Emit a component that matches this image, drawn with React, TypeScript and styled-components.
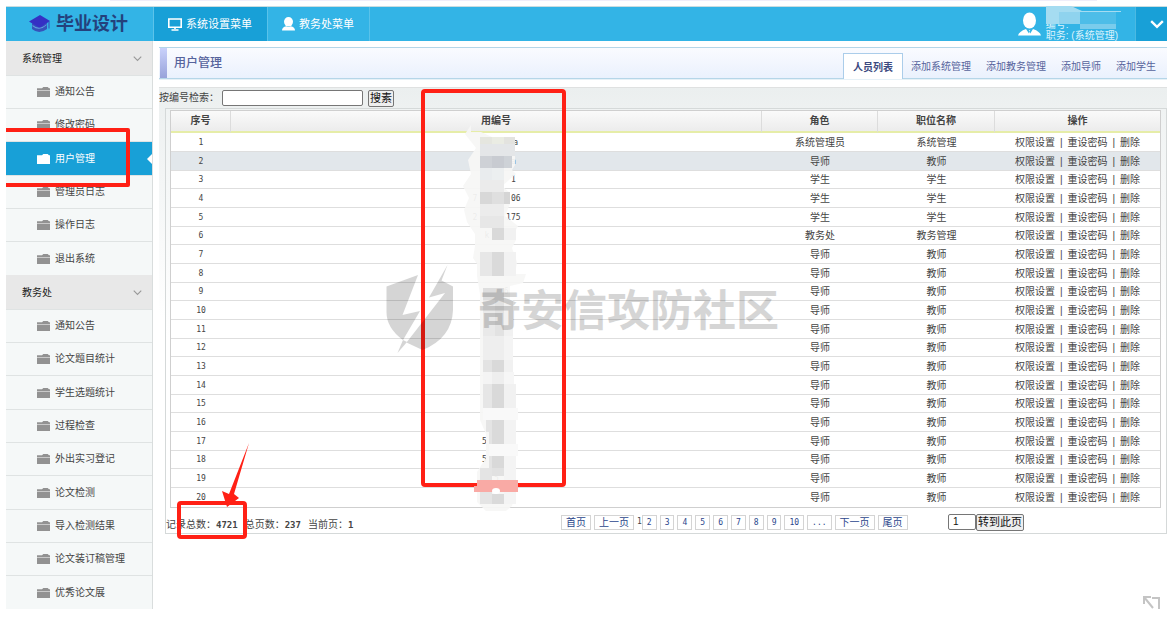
import React from 'react';
import styled, { createGlobalStyle, css } from 'styled-components';

const GlobalStyle = createGlobalStyle`
  * { box-sizing: border-box; }
  body {
    margin: 0;
    background: #fff;
    color: #444;
    font: 10px/16px "Liberation Sans", "Noto Sans CJK SC", sans-serif;
  }
  ul { list-style: none; margin: 0; padding: 0; }
  a { color: inherit; text-decoration: none; }
  h1, h2, p { margin: 0; font-size: inherit; }
  button, input { font: inherit; color: #111; }
`;

const Page = styled.div`
  position: relative;
  padding: 0 3px 0 6px;
  overflow: hidden;
`;

const TopStrip = styled.div`
  height: 6px;
  margin: 0 6%  0 9%;
  border-top: 1px solid #efeefa;
`;

const Header = styled.header`
  display: flex;
  height: 35px;
  border-top: 1px solid #c9dde0;
  background: #33b4e6;
  color: #fff;
`;

const Logo = styled.a`
  display: flex;
  align-items: center;
  gap: 5px;
  width: 148px;
  padding-left: 23px;
  border-right: 1px solid #5cc3ea;
  color: #24417c;
  font-size: 18px;
  line-height: 32px;
  font-weight: 700;
`;

const TopNav = styled.nav`
  display: flex;
  flex: 1;
`;

const TopLink = styled.a<{ $active?: boolean }>`
  display: flex;
  align-items: center;
  gap: 4px;
  padding: 0 15px 0 14px;
  border-right: 1px solid #59c2ea;
  font-size: 11px;
  background: ${(p) => (p.$active ? '#18a0d7' : 'transparent')};
`;

const User = styled.div`
  display: flex;
  align-items: center;
  gap: 5px;
  padding-right: 17px;
  color: #dcf3fc;
  line-height: 11px;
`;

const UserText = styled.div`
  align-self: flex-end;
`;

const Toggle = styled.button`
  display: flex;
  align-items: center;
  justify-content: flex-end;
  width: 32px;
  padding: 0 3px;
  border: 0;
  border-left: 1px solid #4bb9e2;
  background: #18a0d7;
`;

const Body = styled.div`
  display: flex;
  align-items: stretch;
`;

const Sidebar = styled.aside`
  flex: none;
  width: 147px;
  border-right: 1px solid #d9dddd;
  background: #f5f8f8;
`;

const GroupHead = styled.h2`
  display: flex;
  align-items: center;
  justify-content: space-between;
  height: 34px;
  padding: 1px 10px 0 16px;
  background: #e8e8e8;
  color: #222;
  font-weight: 400;
`;

const MenuItem = styled.li<{ $active?: boolean }>`
  height: 33px;
  border-top: 1px solid #dfe3e3;
  &:nth-child(3n) { height: 34px; }
  ${(p) =>
    p.$active &&
    css`
      background: #18a0d7;
      color: #fff;
    `}
`;

const MenuLink = styled.a`
  display: flex;
  align-items: center;
  gap: 5px;
  height: 100%;
  padding-left: 31px;
  svg:last-child:not(:first-child) { margin-left: auto; }
`;

const Main = styled.main`
  flex: 1;
  min-width: 0;
  padding: 6px 0 0 6px;
`;

const TitleBar = styled.div`
  display: flex;
  align-items: flex-end;
  height: 32px;
  padding-right: 4px;
  border-top: 1px solid #b5d6e8;
  border-bottom: 1px solid #b5d6e8;
  background: linear-gradient(#fafbff, #eaf1fd);
  color: #56639c;
  box-shadow: 0 1px #e6f1f7;
`;

const Accent = styled.span`
  align-self: stretch;
  width: 7px;
  margin-left: 1px;
  background: linear-gradient(#c9d1fb, #98a3da);
`;

const Title = styled.h1`
  flex: 1;
  align-self: center;
  padding-left: 7px;
  font-size: 12px;
  font-weight: 500;
`;

const Tab = styled.a<{ $active?: boolean }>`
  height: 25px;
  padding: 0 7px 0 8px;
  line-height: 27px;
  ${(p) =>
    p.$active &&
    css`
      margin-bottom: -1px;
      height: 26px;
      padding: 0 9px;
      border: 1px solid #abcdea;
      border-bottom: 0;
      background: #fff;
      color: #3d4a80;
      font-weight: 700;
    `}
`;

const Content = styled.section`
  margin-top: 8px;
  border-top: 1px solid #dfe1e1;
  background: linear-gradient(#ebefef, #eef1f1 24px, #fff 230px);
`;

const Search = styled.form`
  display: flex;
  align-items: center;
  height: 20px;
`;

const TextBox = styled.input`
  height: 16px;
  padding: 0 4px;
  border: 1px solid #767676;
  border-radius: 2px;
  background: #fff;
`;

const SearchBox = styled(TextBox)`
  width: 141px;
  margin: 0 5px 0 3px;
`;

const Button = styled.button`
  height: 17px;
  padding: 0 1px;
  border: 1px solid #767676;
  border-radius: 2px;
  background: #efefef;
  font-size: 11px;
  line-height: 14px;
`;

const Panel = styled.div`
  margin-left: 6px;
  border: 1px solid #d5d9d9;
  background: linear-gradient(#f0f3f3, #fff 230px);
`;

const TableWrap = styled.div`
  padding: 1px 5px 0 4px;
`;

const Table = styled.table`
  width: 100%;
  border: 1px solid #cfcfcf;
  border-spacing: 0;
  table-layout: fixed;
  background: #fff;
  text-align: center;
`;

const HeadCell = styled.th`
  height: 22px;
  padding: 0;
  border-bottom: 2px solid #e6eda8;
  border-right: 1px solid #dcdcdc;
  background: linear-gradient(#fafafa, #ececec);
  font-weight: 700;
  &:last-child { border-right: 0; }
`;

const Row = styled.tr<{ $active?: boolean }>`
  background: ${(p) => (p.$active ? '#e2e7eb' : '#fff')};
  td {
    height: 19px;
    padding: 0;
    border-bottom: 1px solid #dedede;
    line-height: 17px;
  }
  &:nth-child(3n) td { height: 18px; }
  &:last-child td { border-bottom: 0; }
`;

const Digits = styled.td`
  font-family: "DejaVu Sans Mono", monospace;
  font-size: 8px;
  white-space: pre;
`;

const Actions = styled.div`
  display: flex;
  justify-content: center;
  gap: 5px;
`;

const Footer = styled.div`
  display: grid;
  grid-template-columns: 395fr 387fr 218fr;
  align-items: center;
  height: 25px;
  padding-top: 3px;
`;

const Summary = styled.p`
  display: flex;
  gap: 7px;
  padding-top: 5px;
  b {
    font-family: "DejaVu Sans Mono", monospace;
    font-size: 9px;
  }
`;

const Pager = styled.nav`
  display: flex;
  align-items: center;
  color: #2b468c;
`;

const PageLink = styled.a<{ $digits?: boolean }>`
  height: 15px;
  margin-right: 3px;
  padding: 0 4px;
  border: 1px solid #d4d4d4;
  line-height: 14px;
  ${(p) =>
    p.$digits &&
    css`
      font-family: "DejaVu Sans Mono", monospace;
      font-size: 8px;
    `}
`;

const Current = styled.span`
  font-family: "DejaVu Sans Mono", monospace;
  font-size: 8px;
  color: #444;
`;

const Jump = styled.form`
  display: flex;
  align-items: center;
`;

const JumpBox = styled(TextBox)`
  width: 28px;
`;

const Overlay = styled.svg`
  position: absolute;
  top: 0;
  left: 0;
  pointer-events: none;
`;

const Corner = styled.svg`
  position: absolute;
  right: 10px;
  bottom: 0;
`;

const Folder = ({ color }: { color: string }) => (
  <svg width="13" height="10" viewBox="0 0 13 10" fill={color}>
    <path d="M0 1.3h5L6.3 0h4.4L12 1.3h1V10H0z" />
    <path d="M0 3.500h13" stroke="#fff" strokeOpacity=".5" />
  </svg>
);

const Chevron = ({ color, size, weight }: { color: string; size: number; weight: number }) => (
  <svg width={size} height={size} viewBox="0 0 12 12" fill="none" stroke={color} strokeWidth={weight}>
    <path d="M1 3.5l5 5 5-5" />
  </svg>
);

const CapIcon = () => (
  <svg width="22" height="20" viewBox="0 0 22 20">
    <path d="M3 9l7 4 8-4v6q-8 6-15 0z" fill="#3653bb" />
    <path d="M0 7.5L11 1l10 6-10.500 7z" fill="#3530c4" />
    <path d="M3.500 11q7 6 14-1v1.200q-7 6.500-14 1z" fill="#6fb3ea" opacity=".8" />
    <path d="M20 7.500v7" stroke="#3949b8" />
  </svg>
);

const MonitorIcon = () => (
  <svg width="14" height="13" viewBox="0 0 14 13" fill="none" stroke="#fff" strokeWidth="1.600">
    <path d="M.8 1h12.400v8.200H.8zM7 9v2M3.500 12h7" />
  </svg>
);

const PersonIcon = () => (
  <svg width="13" height="14" viewBox="0 0 13 14" fill="#fff">
    <ellipse cx="6.500" cy="4.800" rx="4.500" ry="4.800" />
    <path d="M0 13.500q0-3.500 4.300-4.200 2.200 1.400 4.400 0 4.300.7 4.300 4.200z" />
  </svg>
);

const AvatarIcon = () => (
  <svg width="23" height="24" viewBox="0 0 23 24" fill="#fff">
    <ellipse cx="11.500" cy="8.500" rx="6.500" ry="8" />
    <path d="M0 23.500q1-4 8-6.500l3 4.500.5-2-.7-1.200h1.500l-.8 1.200.7 2 2.800-4.500q7 2.500 8 6.500z" />
  </svg>
);

const groups = [
  { name: '系统管理', items: ['通知公告', '修改密码', '用户管理', '管理员日志', '操作日志', '退出系统'] },
  {
    name: '教务处',
    items: ['通知公告', '论文题目统计', '学生选题统计', '过程检查', '外出实习登记', '论文检测', '导入检测结果', '论文装订稿管理', '优秀论文展'],
  },
];

const roles: Record<number, [string, string]> = {
  1: ['系统管理员', '系统管理'],
  3: ['学生', '学生'],
  4: ['学生', '学生'],
  5: ['学生', '学生'],
  6: ['教务处', '教务管理'],
};

// Only the characters left legible beside the redaction are kept.
const codes: Record<number, string> = {
  1: '        a',
  2: '       a',
  3: '       1',
  4: '7       06',
  5: '2      175',
  6: 'k    ',
  9: '    6',
  17: '5     ',
  18: '5     ',
  19: '5',
};

const rows = Array.from({ length: 20 }, (_, i) => {
  const n = i + 1;
  const [role, title] = roles[n] || ['导师', '教师'];
  return { n, role, title, code: codes[n] || '' };
});

const tabs = ['人员列表', '添加系统管理', '添加教务管理', '添加导师', '添加学生'];
const pages = ['2', '3', '4', '5', '6', '7', '8', '9', '10', '...'];

// Mosaic tiles: x, y, width, height, fill.
const tiles: [number, number, number, number, string][] = [
  [480, 137, 12, 7, '#e5e6df'], [492, 137, 12, 7, '#eaece3'], [504, 137, 11, 7, '#e3e3df'],
  [480, 144, 35, 12, '#e4e6e8'],
  [480, 156, 12, 12, '#ced1d6'], [492, 156, 12, 12, '#c8cbd1'], [504, 156, 8, 12, '#ced2d7'],
  [480, 168, 12, 12, '#e9ecee'], [492, 168, 12, 12, '#eceff0'],
  [480, 180, 24, 12, '#ebebeb'],
  [480, 192, 12, 12, '#d8d8d8'], [492, 192, 12, 12, '#dfdfdf'], [504, 192, 6, 12, '#d5d5d5'],
  [480, 204, 24, 12, '#ececec'], [480, 216, 24, 12, '#e7e7e7'],
  [492, 228, 12, 12, '#d9d9d9'], [504, 228, 12, 12, '#f1f1f1'],
  [480, 252, 12, 24, '#e7e7e7'], [492, 252, 12, 24, '#dadada'], [504, 252, 12, 24, '#f2f2f2'],
  [483, 288, 21, 12, '#dedede'],
  [483, 300, 12, 36, '#e9e9e9'], [495, 300, 9, 36, '#e2e2e2'], [504, 300, 9, 36, '#f1f1f1'],
  [483, 336, 21, 24, '#eeeeee'], [504, 336, 9, 24, '#f4f4f4'],
  [483, 360, 9, 12, '#e3e3e3'], [492, 360, 12, 12, '#d9d9d9'], [504, 360, 9, 12, '#f1f1f1'],
  [483, 372, 9, 12, '#f4f4f4'], [492, 372, 12, 12, '#eeeeee'], [504, 372, 10, 12, '#f6f6f6'],
  [483, 384, 9, 24, '#e6e6e6'], [492, 384, 12, 24, '#d9d9d9'], [504, 384, 12, 24, '#f1f1f1'],
  [483, 408, 35, 12, '#f9f9f9'],
  [486, 420, 6, 12, '#e4e4e4'], [489, 432, 3, 12, '#e4e4e4'], [492, 420, 12, 24, '#dadada'], [504, 420, 12, 24, '#f3f3f3'],
  [489, 444, 29, 12, '#f9f9f9'],
  [489, 456, 3, 12, '#e4e4e4'], [492, 456, 12, 12, '#d9d9d9'], [504, 456, 12, 12, '#f4f4f4'],
  [480, 468, 12, 12, '#e4e4e4'], [492, 468, 12, 8, '#e1e1e1'], [504, 468, 12, 12, '#f4f4f4'],
  [480, 492, 12, 12, '#e4e4e4'], [492, 494, 12, 10, '#dadada'], [504, 492, 12, 12, '#f4f4f4'],
];

export default function App() {
  return (
    <>
      <GlobalStyle />
      <Page>
        <TopStrip />
        <Header>
          <Logo href="#"><CapIcon />毕业设计</Logo>
          <TopNav>
            <TopLink href="#" $active><MonitorIcon />系统设置菜单</TopLink>
            <TopLink href="#"><PersonIcon />教务处菜单</TopLink>
          </TopNav>
          <User>
            <AvatarIcon />
            <UserText>编号:<br />职务: (系统管理)</UserText>
          </User>
          <Toggle type="button" aria-label="展开"><Chevron color="#fff" size={14} weight={2} /></Toggle>
        </Header>
        <Body>
          <Sidebar>
            {groups.map((g, gi) => (
              <React.Fragment key={g.name}>
                <GroupHead>{g.name}<Chevron color="#999" size={9} weight={1.5} /></GroupHead>
                <ul>
                  {g.items.map((item, i) => {
                    const active = gi === 0 && i === 2;
                    return (
                      <MenuItem key={item} $active={active}>
                        <MenuLink href="#">
                          <Folder color={active ? '#fff' : '#929292'} />
                          {item}
                          {active && (
                            <svg width="5" height="10" viewBox="0 0 5 10"><path d="M5 0v10L0 5z" fill="#fff" /></svg>
                          )}
                        </MenuLink>
                      </MenuItem>
                    );
                  })}
                </ul>
              </React.Fragment>
            ))}
          </Sidebar>
          <Main>
            <TitleBar>
              <Accent />
              <Title>用户管理</Title>
              {tabs.map((t, i) => <Tab key={t} href="#" $active={i === 0}>{t}</Tab>)}
            </TitleBar>
            <Content>
              <Search>
                <label htmlFor="code">按编号检索：</label>
                <SearchBox id="code" type="text" />
                <Button type="button">搜素</Button>
              </Search>
              <Panel>
                <TableWrap>
                  <Table>
                    <colgroup>
                      <col width="60" /><col /><col width="116" /><col width="117" /><col width="165" />
                    </colgroup>
                    <thead>
                      <tr>
                        {['序号', '用编号', '角色', '职位名称', '操作'].map((h) => <HeadCell key={h}>{h}</HeadCell>)}
                      </tr>
                    </thead>
                    <tbody>
                      {rows.map((r) => (
                        <Row key={r.n} $active={r.n === 2}>
                          <Digits>{r.n}</Digits>
                          <Digits>{r.code}</Digits>
                          <td>{r.role}</td>
                          <td>{r.title}</td>
                          <td>
                            <Actions>
                              <a href="#">权限设置</a>|<a href="#">重设密码</a>|<a href="#">删除</a>
                            </Actions>
                          </td>
                        </Row>
                      ))}
                    </tbody>
                  </Table>
                </TableWrap>
                <Footer>
                  <Summary>
                    <span>记录总数：<b>4721</b></span>
                    <span>总页数：<b>237</b></span>
                    <span>当前页：<b>1</b></span>
                  </Summary>
                  <Pager>
                    <PageLink href="#">首页</PageLink>
                    <PageLink href="#">上一页</PageLink>
                    <Current>1</Current>
                    {pages.map((p) => <PageLink key={p} href="#" $digits>{p}</PageLink>)}
                    <PageLink href="#">下一页</PageLink>
                    <PageLink href="#">尾页</PageLink>
                  </Pager>
                  <Jump>
                    <JumpBox type="text" aria-label="页码" defaultValue="1" />
                    <Button type="button">转到此页</Button>
                  </Jump>
                </Footer>
              </Panel>
            </Content>
          </Main>
        </Body>
        <Corner width="17" height="13" viewBox="0 0 17 13" fill="none" stroke="#c4c4c4" strokeWidth="2">
          <path d="M1 8V1h7M1 1l9 11M9 2h7v11" />
        </Corner>
        <Overlay width="1170" height="619" viewBox="0 0 1170 619">
          {/* redaction over the user name */}
          <path d="M1046 6h25l11 5h39v1h-39l6 4v8h-42z" fill="#a5dcf1" />
          <path d="M1059 12h21v12h-21z" fill="#8fd3ee" />
          <path d="M1080 12h36v12h-36z" fill="#4dbde8" />
          <path d="M1080 24h36v5h-36z" fill="#7accec" />
          {/* redaction over the code column */}
          <path
            d="M471 132h10l11 5h23v28l-3 5 4 4-14 12 8 7v11l-5 12 13 10-2 4v10l-4 8 5 14-2 12h11l-3 9-13 3v74l3 12v80l2 20v24l-3 10-6 5h-20l-9-9v-30l9-14v-24l-6-14v-126l-3-18v-12l-4-6 2-12v-12l-8-12-3-12 5-12-6-12 8-12-3-14 8-12-11-14 6-9z"
            fill="#f6f6f5"
            opacity=".94"
          />
          {tiles.map(([x, y, w, h, fill]) => (
            <rect key={`${x}-${y}`} x={x} y={y} width={w} height={h} fill={fill} />
          ))}
          {/* red call-outs */}
          <g fill="none" stroke="#ff2015" strokeWidth="4" strokeLinejoin="round">
            <path d="M6 130h122v55H6" />
            <rect x="423" y="91" width="141" height="394" rx="2" />
            <rect x="179" y="503" width="66" height="34" rx="2" />
          </g>
          <path d="M249 443L234 494L239 498L227 507L222 491L229 494Z" fill="#ff2015" />
          <path d="M477 480h41v12h-44v-6h3z" fill="#f9aaa5" />
          <ellipse cx="496" cy="491" rx="4" ry="3" fill="#fff" />
          {/* community watermark */}
          <g fill="#000" opacity=".16">
            <path d="M386.500 286.500L418 275L402.500 315L420 311L403 340Q386.500 328 386.500 312z" />
            <path d="M447.500 265L441.500 280.500L453 286.500V310Q452 338 422.500 350L406.500 342.500L445 293L429 297.500z" />
            <path d="M403 340L397.500 353L407 342z" />
            <text x="478" y="326" fontSize="43" fontWeight="700" fontFamily="Noto Sans CJK SC, sans-serif">奇安信攻防社区</text>
          </g>
        </Overlay>
      </Page>
    </>
  );
}
